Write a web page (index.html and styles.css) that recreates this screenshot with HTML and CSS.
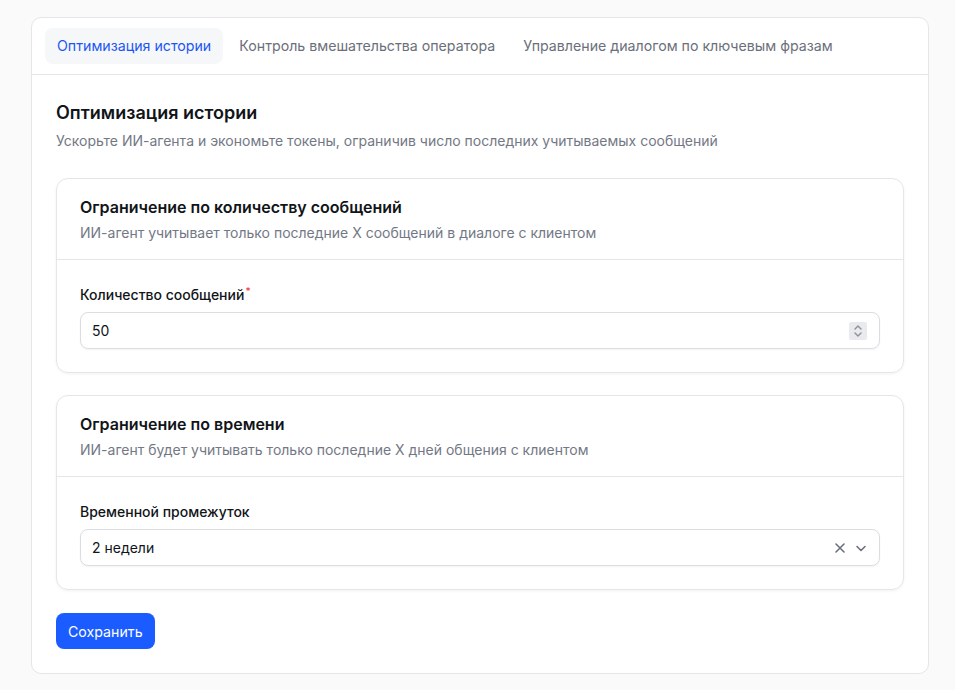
FILE: index.html
```html
<!DOCTYPE html>
<html lang="ru">
<head>
    <meta charset="UTF-8">
    <meta name="viewport" content="width=device-width, initial-scale=1.0">
    <title>Оптимизация истории</title>
    <link rel="stylesheet" href="styles.css">
</head>
<body>

<div class="settings-card">
    <nav class="tabs">
        <div class="tab active">Оптимизация истории</div>
        <div class="tab">Контроль вмешательства оператора</div>
        <div class="tab">Управление диалогом по ключевым фразам</div>
    </nav>

    <div class="settings-body">
        <h1>Оптимизация истории</h1>
        <p class="subtitle">Ускорьте ИИ-агента и экономьте токены, ограничив число последних учитываемых сообщений</p>

        <div class="block">
            <div class="block-head">
                <h2>Ограничение по количеству сообщений</h2>
                <p>ИИ-агент учитывает только последние X сообщений в диалоге с клиентом</p>
            </div>
            <div class="block-content">
                <label class="field-label" for="msg-count">Количество сообщений<span class="req">*</span></label>
                <div class="field">
                    <input type="text" id="msg-count" value="50">
                    <span class="spinner">
                        <svg width="12" height="14" viewBox="0 0 12 14" fill="none" stroke="#8c8f99" stroke-width="1.4" stroke-linecap="round" stroke-linejoin="round">
                            <path d="M3 5l3-3 3 3"/>
                            <path d="M3 9l3 3 3-3"/>
                        </svg>
                    </span>
                </div>
            </div>
        </div>

        <div class="block">
            <div class="block-head">
                <h2>Ограничение по времени</h2>
                <p>ИИ-агент будет учитывать только последние X дней общения с клиентом</p>
            </div>
            <div class="block-content">
                <label class="field-label">Временной промежуток</label>
                <div class="field select">
                    <span class="select-value">2 недели</span>
                    <span class="select-icons">
                        <svg width="12" height="12" viewBox="0 0 12 12" fill="none" stroke="#6b7080" stroke-width="1.6" stroke-linecap="round">
                            <path d="M2 2l8 8M10 2l-8 8"/>
                        </svg>
                        <svg width="12" height="12" viewBox="0 0 12 12" fill="none" stroke="#6b7080" stroke-width="1.6" stroke-linecap="round" stroke-linejoin="round">
                            <path d="M2 4.5l4 4 4-4"/>
                        </svg>
                    </span>
                </div>
            </div>
        </div>

        <button type="button" class="save-btn">Сохранить</button>
    </div>
</div>

</body>
</html>
```

FILE: styles.css
```css
* {
    margin: 0;
    padding: 0;
    box-sizing: border-box;
}

body {
    font-family: Inter, "Noto Sans", sans-serif;
    background-color: #fafafa;
    color: #111418;
    padding: 17px 26px 0 31px;
}

.settings-card {
    background-color: #fff;
    border: 1px solid #e6e6e8;
    border-radius: 10px;
}

.tabs {
    display: flex;
    gap: 4px;
    padding: 10px 13px 10px;
    border-bottom: 1px solid #e6e6e8;
}

.tab {
    height: 36px;
    line-height: 36px;
    padding: 0 12px;
    font-size: 14.2px;
    color: #6b6f7b;
    border-radius: 8px;
}

.tab.active {
    background-color: #f6f7f9;
    color: #1a56f5;
}

.settings-body {
    padding: 24px 24px 24px;
}

.settings-body h1 {
    font-size: 18px;
    line-height: 28px;
    font-weight: 600;
}

.subtitle {
    margin-top: 4px;
    font-size: 14px;
    line-height: 20px;
    color: #737885;
}

.block {
    margin-top: 27px;
    border: 1px solid #e6e6e8;
    border-radius: 12px;
    box-shadow: 0 1px 3px rgba(0, 0, 0, 0.06);
}

.block + .block {
    margin-top: 22px;
}

.block-head {
    padding: 16px 23px 16px;
    border-bottom: 1px solid #e6e6e8;
}

.block-head h2 {
    font-size: 16px;
    line-height: 24px;
    font-weight: 600;
}

.block-head p {
    margin-top: 4px;
    font-size: 14px;
    line-height: 20px;
    color: #737885;
}

.block-content {
    padding: 25px 23px 23px;
}

.field-label {
    display: block;
    font-size: 14px;
    line-height: 20px;
    font-weight: 500;
    margin-bottom: 7px;
}

.req {
    color: #f03a3a;
    font-size: 10px;
    vertical-align: top;
    margin-left: 1px;
    position: relative;
    top: -4px;
}

.field {
    display: flex;
    align-items: center;
    height: 37px;
    border: 1px solid #dcdde1;
    border-radius: 8px;
    padding: 0 12px 0 11px;
    box-shadow: 0 1px 2px rgba(0, 0, 0, 0.05);
}

.field input {
    flex: 1;
    border: none;
    outline: none;
    font-family: inherit;
    font-size: 14px;
    color: #111418;
    background: transparent;
}

.spinner {
    display: flex;
    align-items: center;
    justify-content: center;
    width: 18px;
    height: 18px;
    background-color: #e9eaed;
    border-radius: 2px;
}

.select-value {
    flex: 1;
    font-size: 14px;
}

.select-icons {
    display: flex;
    gap: 9px;
    align-items: center;
}

.save-btn {
    margin-top: 23px;
    height: 36px;
    padding: 0 12px;
    background-color: #1a5cff;
    color: #fff;
    border: none;
    border-radius: 8px;
    font-family: inherit;
    font-size: 14.2px;
    cursor: pointer;
}
```
